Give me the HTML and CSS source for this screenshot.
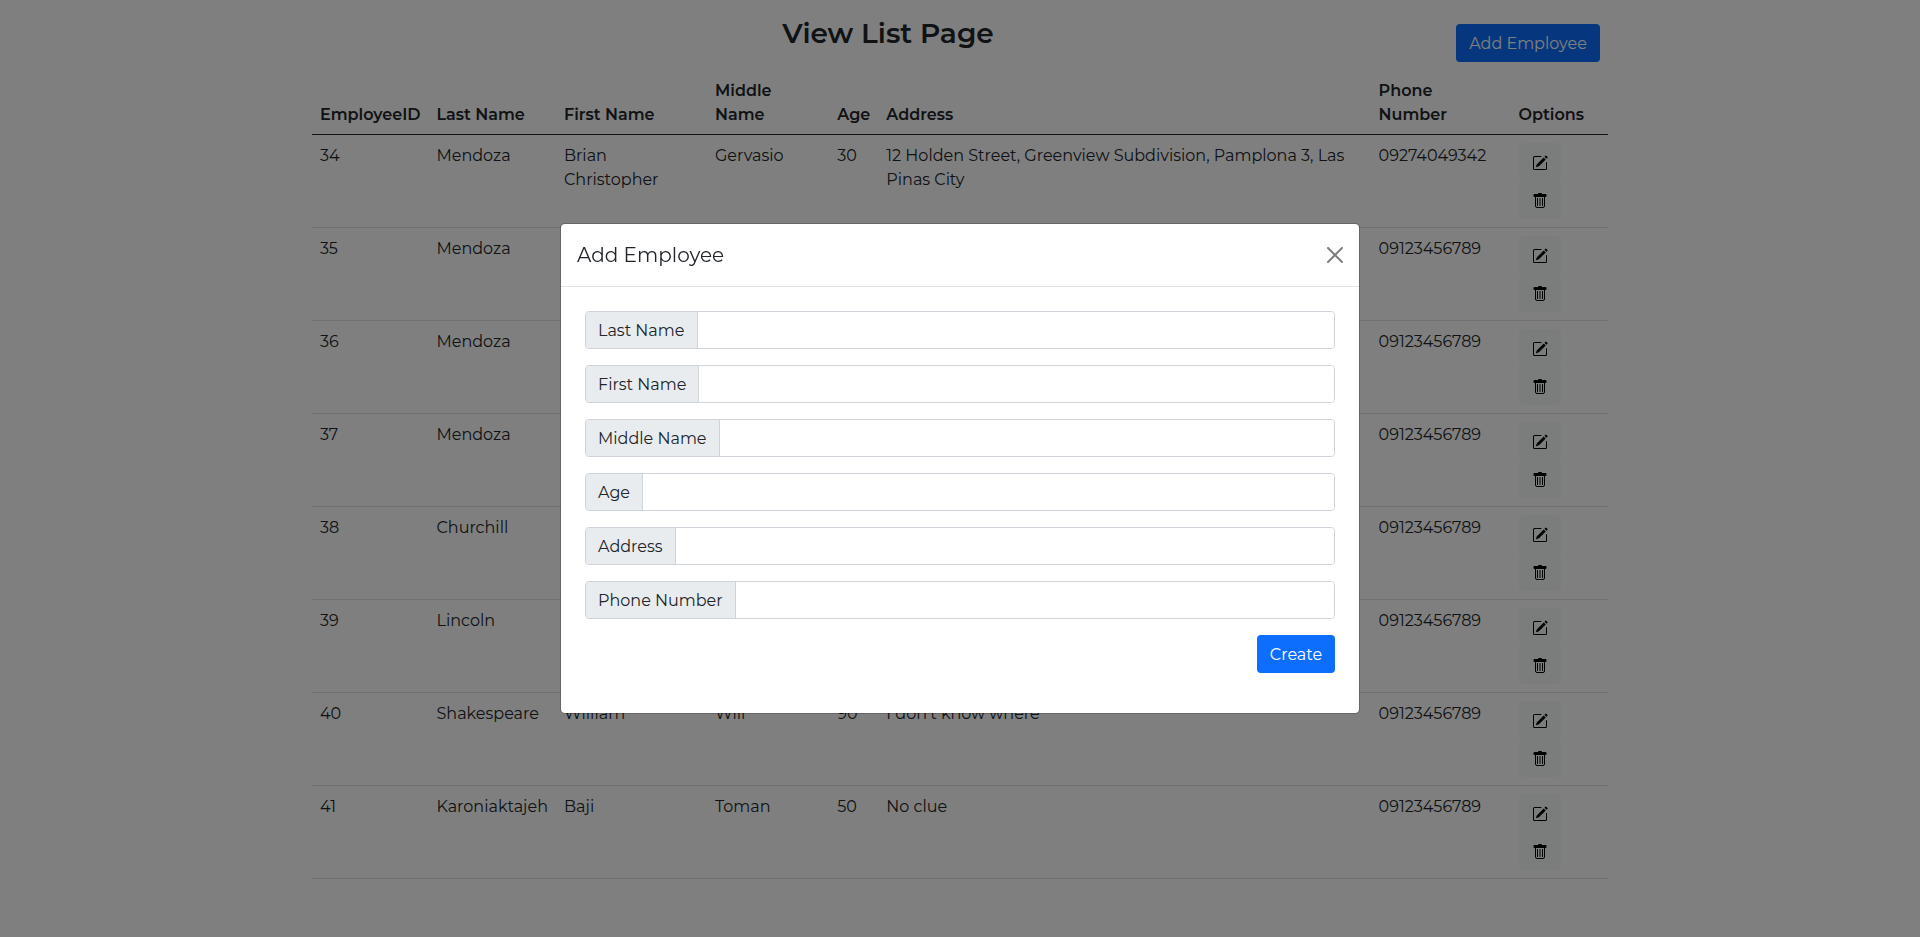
FILE: index.html
```html
<!DOCTYPE html>
<html lang="en">
<head>
<meta charset="utf-8">
<title>View List Page</title>
<link rel="stylesheet" href="styles.css">
</head>
<body>
<svg class="sprite" aria-hidden="true">
  <symbol id="edit" viewBox="0 0 16 16"><path d="M15.502 1.94a.5.5 0 0 1 0 .706L14.459 3.69l-2-2L13.502.646a.5.5 0 0 1 .707 0l1.293 1.293zm-1.75 2.456-2-2L4.939 9.21a.5.5 0 0 0-.121.196l-.805 2.414a.25.25 0 0 0 .316.316l2.414-.805a.5.5 0 0 0 .196-.12l6.813-6.814z"/><path fill-rule="evenodd" d="M1 13.500A1.500 1.500 0 0 0 2.500 15h11a1.500 1.500 0 0 0 1.500-1.500v-6a.5.5 0 0 0-1 0v6a.5.5 0 0 1-.5.5h-11a.5.5 0 0 1-.5-.5v-11a.5.5 0 0 1 .5-.5H9a.5.5 0 0 0 0-1H2.500A1.500 1.500 0 0 0 1 2.500v11z"/></symbol>
  <symbol id="trash" viewBox="0 0 16 16"><path d="M6 1a1 1 0 0 1 1-1h2a1 1 0 0 1 1 1h3.500a1 1 0 0 1 1 1v1a1 1 0 0 1-1 1h-11a1 1 0 0 1-1-1V2a1 1 0 0 1 1-1z"/><path d="M3.500 3.500V13A1.500 1.500 0 0 0 5 14.500h6a1.500 1.500 0 0 0 1.500-1.500V3.500M5.500 5.500v7M8 5.500v7M10.500 5.500v7" fill="none" stroke="#000" stroke-linecap="round"/></symbol>
</svg>
<div class="container">
  <header class="top"><h3>View List Page</h3><button class="btn primary">Add Employee</button></header>
  <table class="table">
    <colgroup><col class="c1"><col class="c2"><col class="c3"><col class="c4"><col class="c5"><col class="c6"><col class="c7"><col class="c8"></colgroup>
    <thead><tr><th>EmployeeID</th><th>Last Name</th><th>First Name</th><th>Middle<br>Name</th><th>Age</th><th>Address</th><th>Phone<br>Number</th><th>Options</th></tr></thead>
    <tbody>
      <tr><td>34</td><td>Mendoza</td><td>Brian<br>Christopher</td><td>Gervasio</td><td>30</td><td>12 Holden Street, Greenview Subdivision, Pamplona 3, Las<br>Pinas City</td><td>09274049342</td><td class="options"><button class="icon"><svg><use href="#edit"/></svg></button><button class="icon"><svg><use href="#trash"/></svg></button></td></tr>
      <tr><td>35</td><td>Mendoza</td><td></td><td></td><td></td><td></td><td>09123456789</td><td class="options"><button class="icon"><svg><use href="#edit"/></svg></button><button class="icon"><svg><use href="#trash"/></svg></button></td></tr>
      <tr><td>36</td><td>Mendoza</td><td></td><td></td><td></td><td></td><td>09123456789</td><td class="options"><button class="icon"><svg><use href="#edit"/></svg></button><button class="icon"><svg><use href="#trash"/></svg></button></td></tr>
      <tr><td>37</td><td>Mendoza</td><td></td><td></td><td></td><td></td><td>09123456789</td><td class="options"><button class="icon"><svg><use href="#edit"/></svg></button><button class="icon"><svg><use href="#trash"/></svg></button></td></tr>
      <tr><td>38</td><td>Churchill</td><td></td><td></td><td></td><td></td><td>09123456789</td><td class="options"><button class="icon"><svg><use href="#edit"/></svg></button><button class="icon"><svg><use href="#trash"/></svg></button></td></tr>
      <tr><td>39</td><td>Lincoln</td><td></td><td></td><td></td><td></td><td>09123456789</td><td class="options"><button class="icon"><svg><use href="#edit"/></svg></button><button class="icon"><svg><use href="#trash"/></svg></button></td></tr>
      <tr><td>40</td><td>Shakespeare</td><td>William</td><td>Will</td><td>90</td><td>I don't know where</td><td>09123456789</td><td class="options"><button class="icon"><svg><use href="#edit"/></svg></button><button class="icon"><svg><use href="#trash"/></svg></button></td></tr>
      <tr><td>41</td><td>Karoniaktajeh</td><td>Baji</td><td>Toman</td><td>50</td><td>No clue</td><td>09123456789</td><td class="options"><button class="icon"><svg><use href="#edit"/></svg></button><button class="icon"><svg><use href="#trash"/></svg></button></td></tr>
    </tbody>
  </table>
</div>
<div class="backdrop">
  <div class="modal">
    <div class="modal-header"><h5>Add Employee</h5><svg class="close" viewBox="0 0 16 16"><path d="M.293.293a1 1 0 0 1 1.414 0L8 6.586 14.293.293a1 1 0 1 1 1.414 1.414L9.414 8l6.293 6.293a1 1 0 0 1-1.414 1.414L8 9.414l-6.293 6.293a1 1 0 0 1-1.414-1.414L6.586 8 .293 1.707a1 1 0 0 1 0-1.414z"/></svg></div>
    <form class="modal-body">
      <div class="group"><label class="g1">Last Name</label><input></div>
      <div class="group"><label class="g2">First Name</label><input></div>
      <div class="group"><label class="g3">Middle Name</label><input></div>
      <div class="group"><label class="g4">Age</label><input></div>
      <div class="group"><label class="g5">Address</label><input></div>
      <div class="group"><label class="g6">Phone Number</label><input></div>
      <button type="button" class="btn primary create">Create</button>
    </form>
  </div>
</div>
</body>
</html>
```
FILE: styles.css
```css
* { box-sizing: border-box; }
body { margin: 0; background: #fff; color: #212529; font: 400 16px/24px Montserrat, Inter, sans-serif; overflow: hidden; }
button, input { font: inherit; }
h3, h5 { margin: 0; }
.sprite { display: none; }
.container { width: 1296px; margin: 0 auto; }
.top { display: grid; grid-template-columns: 1152px 136px; height: 70px; padding-top: 16px; }
h3 { font-size: 28px; line-height: 34px; font-weight: 600; text-align: center; }
.btn { height: 38px; padding: 1px 0 0; border: 0; border-radius: 4px; white-space: nowrap; }
.primary { background: #0d6efd; color: #fff; }
.top .btn { width: 144px; margin: 8px 0 0 -8px; }
.table { width: 1296px; table-layout: fixed; border-collapse: separate; border-spacing: 0; }
.c1 { width: 116.500px; }
.c2 { width: 127.500px; }
.c3 { width: 151px; }
.c4 { width: 122.300px; }
.c5 { width: 49px; }
.c6 { width: 492.300px; }
.c7 { width: 140px; }
.c8 { width: 97.400px; }
th, td { padding: 9px 8px 7px; text-align: left; vertical-align: top; white-space: nowrap; border-bottom: 1px solid #dee2e6; }
th { vertical-align: bottom; font-weight: 600; border-bottom-color: #212529; }
.options { padding: 8px; }
.icon { display: block; width: 42px; height: 38px; padding: 1px 0 0; border: 0; border-radius: 4px; background: #f6f9f9; }
.icon svg { display: block; width: 16px; height: 16px; margin: 0 auto; }
.backdrop { position: fixed; inset: 0; display: flex; justify-content: center; align-items: center; background: rgba(0, 0, 0, .5); }
.modal { width: 800px; height: 491px; border: 1px solid rgba(0, 0, 0, .2); border-radius: 5px; background: #fff; background-clip: padding-box; }
.modal-header { display: flex; justify-content: space-between; align-items: center; height: 63px; padding: 0 16px; border-bottom: 1px solid #dee2e6; }
h5 { font-size: 20px; line-height: 30px; font-weight: 400; }
.close { width: 16px; height: 16px; opacity: .5; }
.modal-body { display: flex; flex-direction: column; gap: 16px; padding: 24px; }
.group { display: flex; height: 38px; border: 1px solid #ced4da; border-radius: 4px; overflow: hidden; }
label { flex: none; padding: 7px 0 5px 12px; background: #e9ecef; border-right: 1px solid #ced4da; white-space: nowrap; }
input { flex: 1; min-width: 0; border: 0; outline: 0; padding: 0 12px; background: #fff; }
.g1 { width: 112px; }
.g2 { width: 113px; }
.g3 { width: 134px; }
.g4 { width: 57px; }
.g5 { width: 90px; }
.g6 { width: 150px; }
.create { align-self: flex-end; width: 78px; }
```
